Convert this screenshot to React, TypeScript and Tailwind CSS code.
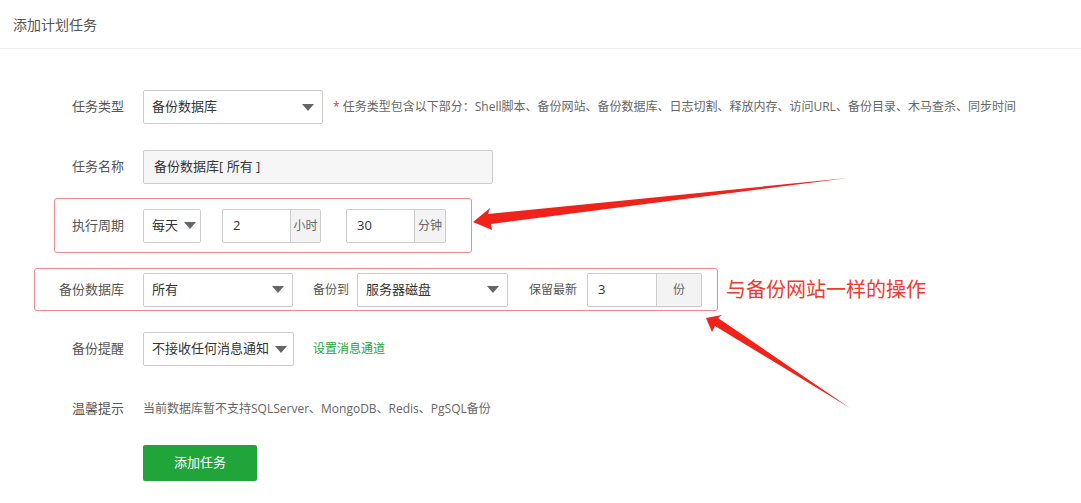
import React from 'react';

const font = { fontFamily: '"Open Sans","Noto Sans CJK SC",sans-serif' };

const Caret = () => (
  <span className="ml-auto pl-[6px] shrink-0">
    <span className="block w-0 h-0 border-l-[6px] border-r-[6px] border-t-[7px] border-l-transparent border-r-transparent border-t-[#666]" />
  </span>
);

const Select: React.FC<{ w: string; text: string }> = ({ w, text }) => (
  <div className={`${w} shrink-0 h-[34px] border border-[#ccc] rounded-[2px] flex items-center pl-2 pr-[8px] text-[13px] text-[#333] bg-white`}>
    <span className="whitespace-nowrap">{text}</span>
    <Caret />
  </div>
);

const Addon: React.FC<{ w: string; val: string; unit: string; uw: string }> = ({ w, val, unit, uw }) => (
  <div className={`${w} shrink-0 h-[34px] border border-[#ccc] rounded-[2px] flex text-[13px]`}>
    <div className="flex-1 flex items-center pl-[10px] text-[#333]">{val}</div>
    <div className={`${uw} shrink-0 border-l border-[#ccc] bg-[#f3f3f3] flex items-center justify-center text-[12px] text-[#666]`}>{unit}</div>
  </div>
);

const Label: React.FC<{ w: string; text: string }> = ({ w, text }) => (
  <div className={`${w} text-right text-[13px] text-[#555] shrink-0 mr-[19px]`}>{text}</div>
);

export default function App() {
  return (
    <div className="relative w-[1081px] h-[503px] bg-white overflow-hidden" style={font}>
      <div className="h-[49px] border-b border-[#eee] flex items-center pl-[13px] text-[14px] text-[#555]">添加计划任务</div>

      <div className="pt-[41px]">
        <div className="flex items-center h-[34px]">
          <Label w="w-[124px]" text="任务类型" />
          <Select w="w-[180px]" text="备份数据库" />
          <span className="ml-[10px] text-[12px] text-[#666] whitespace-nowrap"><span className="text-[#e33]">*</span> 任务类型包含以下部分：Shell脚本、备份网站、备份数据库、日志切割、释放内存、访问URL、备份目录、木马查杀、同步时间</span>
        </div>

        <div className="flex items-center h-[34px] mt-[26px]">
          <Label w="w-[124px]" text="任务名称" />
          <div className="w-[350px] h-[34px] border border-[#ccc] rounded-[2px] bg-[#f6f6f6] flex items-center pl-[10px] text-[13px] text-[#333]">备份数据库[ 所有 ]</div>
        </div>

        <div className="ml-[54px] mt-[14px] w-[418px] h-[55px] border-[1.5px] border-[#ef8b8b] rounded-[3px] flex items-center">
          <Label w="w-[69px]" text="执行周期" />
          <Select w="w-[58px]" text="每天" />
          <div className="ml-[21px]"><Addon w="w-[99px]" val="2" unit="小时" uw="w-[30px]" /></div>
          <div className="ml-[25px]"><Addon w="w-[100px]" val="30" unit="分钟" uw="w-[31px]" /></div>
        </div>

        <div className="flex items-center mt-[15px]">
          <div className="ml-[34px] w-[684px] h-[43px] border-[1.5px] border-[#ef8b8b] rounded-[3px] flex items-center">
            <Label w="w-[89px]" text="备份数据库" />
            <Select w="w-[150px]" text="所有" />
            <span className="ml-[20px] mr-[8px] text-[12px] text-[#555] whitespace-nowrap">备份到</span>
            <Select w="w-[151px]" text="服务器磁盘" />
            <span className="ml-[21px] mr-[10px] text-[12px] text-[#555] whitespace-nowrap">保留最新</span>
            <Addon w="w-[115px]" val="3" unit="份" uw="w-[45px]" />
          </div>
          <span className="ml-[8px] text-[20px] text-[#f03a2e]">与备份网站一样的操作</span>
        </div>

        <div className="flex items-center h-[34px] mt-[21px]">
          <Label w="w-[124px]" text="备份提醒" />
          <Select w="w-[151px]" text="不接收任何消息通知" />
          <span className="ml-[19px] text-[12px] text-[#20a53a]">设置消息通道</span>
        </div>

        <div className="flex items-center h-[34px] mt-[26px]">
          <Label w="w-[124px]" text="温馨提示" />
          <span className="text-[12px] text-[#666]">当前数据库暂不支持SQLServer、MongoDB、Redis、PgSQL备份</span>
        </div>

        <div className="ml-[143px] mt-[19px] w-[114px] h-[36px] bg-[#20a53a] rounded-[2px] flex items-center justify-center text-[13px] text-white">添加任务</div>
      </div>

      <svg className="absolute inset-0 pointer-events-none" width="1081" height="503">
        <polygon points="848,178 488,214 490,208 473,222 492,230 491,224" fill="#f0231b" />
        <polygon points="850,408 718,318 722,315 706,318 712,332 715,326" fill="#f0231b" />
      </svg>
    </div>
  );
}
